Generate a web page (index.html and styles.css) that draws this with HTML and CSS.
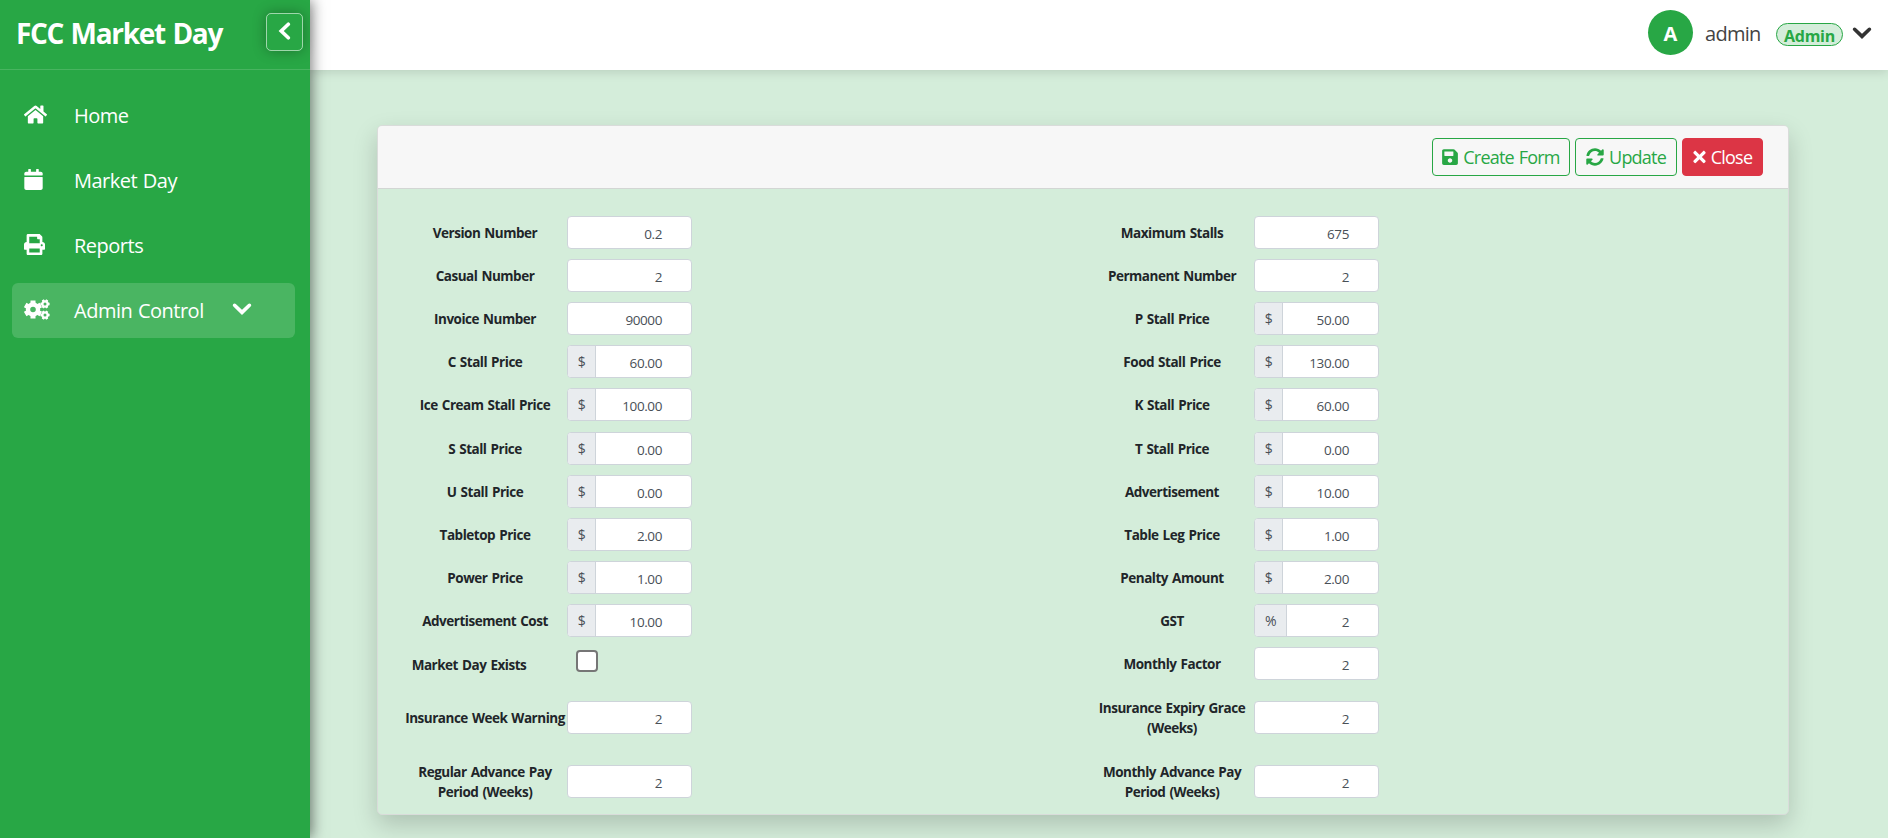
FILE: index.html
```html
<!DOCTYPE html>
<html lang="en">
<head>
<meta charset="utf-8">
<title>FCC Market Day</title>
<link rel="stylesheet" href="styles.css">
</head>
<body>
<div class="app">
  <aside class="sidebar">
    <div class="brand">
      <span class="brand-name">FCC Market Day</span>
      <button class="collapse" aria-label="Collapse"><svg width="13" height="18" viewBox="0 0 13 18"><path class="line" d="M10.3 2.2 3.2 9l7.1 6.8"/></svg></button>
    </div>
    <nav class="nav">
      <a class="nav-item"><span class="nav-icon"><svg width="23" height="21" viewBox="0 0 576 512"><path d="M280.37 148.26L96 300.11V464a16 16 0 0 0 16 16l112.06-.29a16 16 0 0 0 15.92-16V368a16 16 0 0 1 16-16h64a16 16 0 0 1 16 16v95.64a16 16 0 0 0 16 16.05L464 480a16 16 0 0 0 16-16V300L295.67 148.26a12.19 12.19 0 0 0-15.3 0zM571.6 251.47L488 182.56V44.05a12 12 0 0 0-12-12h-56a12 12 0 0 0-12 12v72.61L318.47 43a48 48 0 0 0-61 0L4.34 251.47a12 12 0 0 0-1.6 16.9l25.5 31A12 12 0 0 0 45.15 301l235.22-193.74a12.19 12.19 0 0 1 15.3 0L530.9 301a12 12 0 0 0 16.9-1.6l25.5-31a12 12 0 0 0-1.7-16.93z"/></svg></span><span>Home</span></a>
      <a class="nav-item"><span class="nav-icon"><svg width="19" height="21" viewBox="0 0 448 512"><path d="M12 192h424c6.600 0 12 5.400 12 12v260c0 26.500-21.500 48-48 48H48c-26.500 0-48-21.500-48-48V204c0-6.600 5.400-12 12-12zm436-44v-36c0-26.500-21.500-48-48-48h-48V12c0-6.600-5.400-12-12-12h-40c-6.600 0-12 5.400-12 12v52H160V12c0-6.600-5.400-12-12-12h-40c-6.600 0-12 5.400-12 12v52H48C21.500 64 0 85.500 0 112v36c0 6.600 5.400 12 12 12h424c6.600 0 12-5.400 12-12z"/></svg></span><span>Market Day</span></a>
      <a class="nav-item"><span class="nav-icon"><svg width="21" height="21" viewBox="0 0 512 512"><path d="M448 192V77.250c0-8.490-3.370-16.620-9.370-22.630L393.370 9.370c-6-6-14.140-9.370-22.630-9.370H96C78.330 0 64 14.330 64 32v160c-35.350 0-64 28.650-64 64v112c0 8.840 7.160 16 16 16h48v96c0 17.670 14.330 32 32 32h320c17.670 0 32-14.330 32-32v-96h48c8.840 0 16-7.160 16-16V256c0-35.350-28.650-64-64-64zm-64 256H128v-96h256v96zm0-224H128V64h192v48c0 8.840 7.160 16 16 16h48v96zm48 72c-13.250 0-24-10.750-24-24 0-13.260 10.750-24 24-24s24 10.740 24 24c0 13.250-10.750 24-24 24z"/></svg></span><span>Reports</span></a>
      <a class="nav-item active"><span class="nav-icon"><svg width="26" height="21" viewBox="0 0 26 21">
        <g class="gear"><circle cx="9" cy="10.500" r="5" stroke-width="4.400"/><path stroke-width="5" d="M9 1.500v3M9 16.500v3M1.200 6l2.600 1.500M14.200 13.500l2.600 1.500M1.200 15l2.600-1.500M14.200 7.500 16.800 6"/></g>
        <g class="gear"><circle cx="21" cy="4.900" r="2.600" stroke-width="2.200"/><path stroke-width="2.500" d="M18.800.9l.9 1.500M22.300 7.400l.9 1.500M18.800 8.900l.9-1.500M22.300 2.400l.9-1.500M16.400 4.900h1.800M23.800 4.900h1.800"/></g>
        <g class="gear"><circle cx="21" cy="16.100" r="2.600" stroke-width="2.200"/><path stroke-width="2.500" d="M18.800 12.100l.9 1.500M22.300 18.600l.9 1.500M18.800 20.100l.9-1.500M22.300 13.600l.9-1.500M16.400 16.100h1.800M23.800 16.100h1.800"/></g>
      </svg></span><span>Admin Control</span><svg class="caret" width="20" height="14" viewBox="0 0 20 14"><path class="line" d="M2.600 3.300 10 10.400l7.400-7.100"/></svg></a>
    </nav>
  </aside>
  <div class="page">
    <header class="topbar">
      <span class="avatar">A</span>
      <span class="user">admin</span>
      <span class="role">Admin</span>
      <svg class="user-caret" width="20" height="14" viewBox="0 0 20 14"><path class="line" d="M2.600 3.300 10 10.400l7.400-7.100"/></svg>
    </header>
    <main class="content">
      <section class="card">
        <div class="card-header">
          <button class="btn outline create"><svg width="16" height="18" viewBox="0 0 448 512"><path d="M433.941 129.941l-83.882-83.882A48 48 0 0 0 316.118 32H48C21.490 32 0 53.490 0 80v352c0 26.510 21.490 48 48 48h352c26.510 0 48-21.490 48-48V163.882a48 48 0 0 0-14.059-33.941zM224 416c-35.346 0-64-28.654-64-64 0-35.346 28.654-64 64-64s64 28.654 64 64c0 35.346-28.654 64-64 64zm96-304.520V212c0 6.627-5.373 12-12 12H76c-6.627 0-12-5.373-12-12V108c0-6.627 5.373-12 12-12h228.520c3.183 0 6.235 1.264 8.485 3.515l3.480 3.480A11.996 11.996 0 0 1 320 111.480z"/></svg><span>Create Form</span></button>
          <button class="btn outline update"><svg width="18" height="18" viewBox="0 0 512 512"><path d="M370.720 133.280C339.458 104.008 298.888 87.962 255.848 88c-77.458.068-144.328 53.178-162.791 126.850-1.344 5.363-6.122 9.150-11.651 9.150H24.103c-7.498 0-13.194-6.807-11.807-14.176C33.933 94.924 134.813 8 256 8c66.448 0 126.791 26.136 171.315 68.685L463.030 40.970C478.149 25.851 504 36.559 504 57.941V192c0 13.255-10.745 24-24 24H345.941c-21.382 0-32.090-25.851-16.971-40.971l41.750-41.749zM32 296h134.059c21.382 0 32.090 25.851 16.971 40.971l-41.750 41.750c31.262 29.273 71.835 45.319 114.876 45.280 77.418-.070 144.315-53.144 162.787-126.849 1.344-5.363 6.122-9.150 11.651-9.150h57.304c7.498 0 13.194 6.807 11.807 14.176C478.067 417.076 377.187 504 256 504c-66.448 0-126.791-26.136-171.315-68.685L48.970 471.030C33.851 486.149 8 475.441 8 454.059V320c0-13.255 10.745-24 24-24z"/></svg><span>Update</span></button>
          <button class="btn danger"><svg width="13" height="18" viewBox="0 0 352 512"><path d="M242.720 256l100.070-100.070c12.280-12.280 12.280-32.190 0-44.480l-22.240-22.240c-12.280-12.280-32.190-12.280-44.480 0L176 189.280 75.930 89.210c-12.280-12.280-32.190-12.280-44.480 0L9.210 111.450c-12.280 12.280-12.280 32.190 0 44.480L109.280 256 9.210 356.070c-12.280 12.280-12.280 32.190 0 44.480l22.240 22.240c12.280 12.280 32.200 12.280 44.480 0L176 322.720l100.070 100.070c12.280 12.280 32.200 12.280 44.480 0l22.240-22.240c12.280-12.280 12.280-32.190 0-44.480L242.720 256z"/></svg><span>Close</span></button>
        </div>
        <div class="card-body">
          <div class="column">
            <div class="row"><label>Version Number</label><div class="field"><span class="value">0.2</span></div></div>
            <div class="row"><label>Casual Number</label><div class="field"><span class="value">2</span></div></div>
            <div class="row"><label>Invoice Number</label><div class="field"><span class="value">90000</span></div></div>
            <div class="row"><label>C Stall Price</label><div class="field"><span class="unit">$</span><span class="value">60.00</span></div></div>
            <div class="row"><label>Ice Cream Stall Price</label><div class="field"><span class="unit">$</span><span class="value">100.00</span></div></div>
            <div class="row"><label>S Stall Price</label><div class="field"><span class="unit">$</span><span class="value">0.00</span></div></div>
            <div class="row"><label>U Stall Price</label><div class="field"><span class="unit">$</span><span class="value">0.00</span></div></div>
            <div class="row"><label>Tabletop Price</label><div class="field"><span class="unit">$</span><span class="value">2.00</span></div></div>
            <div class="row"><label>Power Price</label><div class="field"><span class="unit">$</span><span class="value">1.00</span></div></div>
            <div class="row"><label>Advertisement Cost</label><div class="field"><span class="unit">$</span><span class="value">10.00</span></div></div>
            <div class="row check"><label>Market Day Exists</label><span class="box"></span></div>
            <div class="row tall"><label>Insurance Week Warning</label><div class="field"><span class="value">2</span></div></div>
            <div class="row tall"><label>Regular Advance Pay<br>Period (Weeks)</label><div class="field"><span class="value">2</span></div></div>
          </div>
          <div class="column">
            <div class="row"><label>Maximum Stalls</label><div class="field"><span class="value">675</span></div></div>
            <div class="row"><label>Permanent Number</label><div class="field"><span class="value">2</span></div></div>
            <div class="row"><label>P Stall Price</label><div class="field"><span class="unit">$</span><span class="value">50.00</span></div></div>
            <div class="row"><label>Food Stall Price</label><div class="field"><span class="unit">$</span><span class="value">130.00</span></div></div>
            <div class="row"><label>K Stall Price</label><div class="field"><span class="unit">$</span><span class="value">60.00</span></div></div>
            <div class="row"><label>T Stall Price</label><div class="field"><span class="unit">$</span><span class="value">0.00</span></div></div>
            <div class="row"><label>Advertisement</label><div class="field"><span class="unit">$</span><span class="value">10.00</span></div></div>
            <div class="row"><label>Table Leg Price</label><div class="field"><span class="unit">$</span><span class="value">1.00</span></div></div>
            <div class="row"><label>Penalty Amount</label><div class="field"><span class="unit">$</span><span class="value">2.00</span></div></div>
            <div class="row"><label>GST</label><div class="field"><span class="unit percent">%</span><span class="value">2</span></div></div>
            <div class="row"><label>Monthly Factor</label><div class="field"><span class="value">2</span></div></div>
            <div class="row tall"><label>Insurance Expiry Grace<br>(Weeks)</label><div class="field"><span class="value">2</span></div></div>
            <div class="row tall"><label>Monthly Advance Pay<br>Period (Weeks)</label><div class="field"><span class="value">2</span></div></div>
          </div>
        </div>
      </section>
    </main>
  </div>
</div>
</body>
</html>
```
FILE: styles.css
```css
* { box-sizing: border-box; }
body {
  margin: 0;
  font-family: "Open Sans", "Noto Sans", sans-serif;
  color: #212529;
  background: #d4edda;
}
svg { display: block; fill: currentColor; flex: none; }
.line { fill: none; stroke: currentColor; stroke-width: 3.6; stroke-linecap: round; }
.gear circle, .gear path { fill: none; stroke: currentColor; }
button { font-family: inherit; margin: 0; padding: 0; }
.app { display: flex; height: 838px; overflow: hidden; }

.sidebar {
  position: relative;
  z-index: 2;
  width: 310px;
  flex: none;
  background: #28a745;
  color: #fff;
  box-shadow: 2px 0 13px rgba(0, 0, 0, .5);
}
.brand {
  height: 70px;
  padding: 0 7px 6px 16px;
  display: flex;
  align-items: center;
  justify-content: space-between;
  border-bottom: 1px solid rgba(255, 255, 255, .15);
}
.brand-name { padding-top: 2px; font-size: 28px; font-weight: 700; line-height: 34px; letter-spacing: -1.3px; word-spacing: 1.5px; white-space: nowrap; }
.collapse {
  width: 37px;
  height: 38px;
  padding: 0 0 2px;
  display: flex;
  align-items: center;
  justify-content: center;
  color: #fff;
  background: transparent;
  border: 1px solid rgba(255, 255, 255, .55);
  border-radius: 5px;
  box-shadow: 0 0 14px rgba(0, 0, 0, .3);
}
.nav { padding: 18px 15px 0 12px; display: flex; flex-direction: column; gap: 10px; }
.nav-item { height: 55px; padding-left: 12px; display: flex; align-items: center; border-radius: 6px; font-size: 20px; letter-spacing: -.5px; word-spacing: 1px; }
.nav-icon { width: 50px; padding-bottom: 3px; }
.nav-item.active { background: rgba(255, 255, 255, .16); }
.caret { margin: -3px 0 0 28px; }

.page { flex: 1; min-width: 0; display: flex; flex-direction: column; }
.topbar {
  height: 70px;
  flex: none;
  padding: 0 16px 5px 0;
  display: flex;
  align-items: center;
  justify-content: flex-end;
  background: #fff;
  box-shadow: 0 2px 10px rgba(0, 0, 0, .13);
  color: #333;
}
.avatar { width: 45px; height: 45px; border-radius: 50%; background: #28a745; color: #fff; font-size: 20px; font-weight: 700; line-height: 48px; text-align: center; }
.user { margin: 2px 0 0 12px; width: 60px; font-size: 20px; line-height: 30px; letter-spacing: -.7px; color: #444; }
.role { margin: 4px 9px 0 11px; width: 67px; height: 23px; border: 1px solid #28a745; border-radius: 12px; background: #d4edda; color: #28a745; font-size: 16px; font-weight: 700; line-height: 24px; letter-spacing: -.3px; text-align: center; }

.content { padding: 55px 99px 0 67px; }
.card { height: 690px; border: 1px solid #d9dcda; border-radius: 5px; background: #d4edda; box-shadow: 0 10px 24px rgba(0, 0, 0, .18); }
.card-header { height: 63px; padding: 0 25px 1px 0; display: flex; align-items: center; justify-content: flex-end; gap: 5px; background: #f7f7f7; border-bottom: 1px solid #d3d6d4; border-radius: 4px 4px 0 0; }
.btn { height: 38px; display: flex; align-items: center; justify-content: center; gap: 5px; border: 1px solid #28a745; border-radius: 4px; background: transparent; color: #28a745; font-size: 18px; letter-spacing: -.8px; word-spacing: 1px; white-space: nowrap; }
.create { width: 138px; }
.update { width: 102px; }
.danger { width: 81px; background: #dc3545; border-color: #dc3545; color: #fff; }

.card-body { padding: 22px 0 0 25px; display: grid; grid-template-columns: 687px 1fr; }
.row { height: 43.100px; display: flex; align-items: center; }
.row label { width: 164px; flex: none; padding-top: 1px; font-size: 13.500px; font-weight: 700; line-height: 20px; letter-spacing: -.48px; word-spacing: 1px; text-align: center; white-space: nowrap; }
.field { width: 125px; height: 33px; display: flex; background: #fff; border: 1px solid #ced4da; border-radius: 4px; overflow: hidden; font-size: 13.500px; letter-spacing: -.4px; line-height: 34px; color: #495057; }
.value { flex: 1; padding-right: 29px; text-align: right; }
.unit { width: 28px; font-size: 14px; line-height: 32px; text-align: center; background: #e9ecef; border-right: 1px solid #ced4da; }
.unit.percent { width: 32px; }
.row.tall { height: 64px; }
.check label { width: 132px; padding-top: 3px; }
.box { width: 22px; height: 22px; margin: -5px 0 0 41px; background: #fff; border: 2px solid #767676; border-radius: 4px; }
```
